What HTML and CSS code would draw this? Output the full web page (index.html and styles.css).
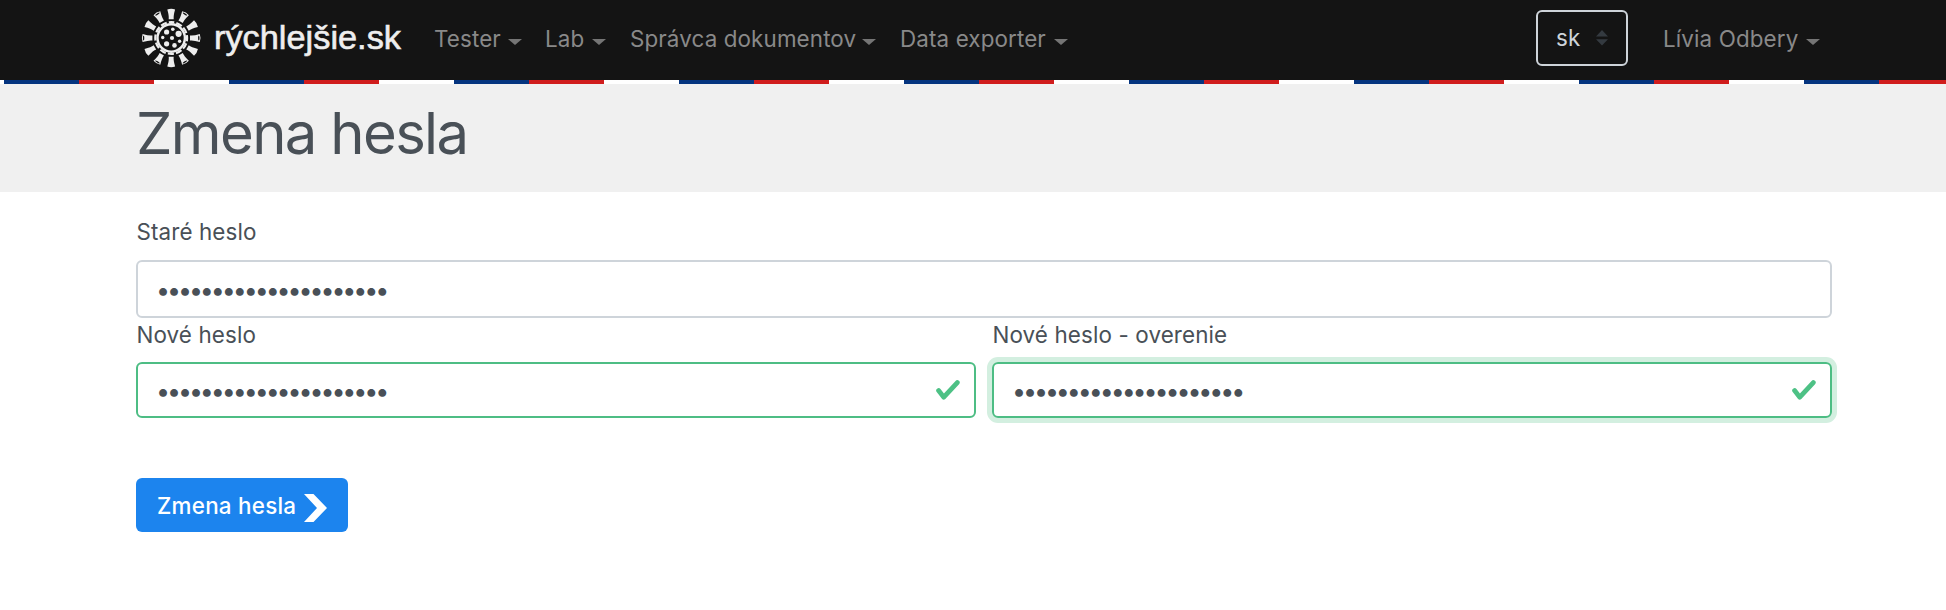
FILE: index.html
```html
<!DOCTYPE html>
<html lang="sk">
<head>
<meta charset="utf-8">
<title>Zmena hesla</title>
<link rel="stylesheet" href="styles.css">
</head>
<body>
<header class="navbar">
  <svg class="logo" width="272" height="80" viewBox="136 0 272 80">
    <defs>
      <path id="spike" d="M-3.9 -28.6 Q0 -30 3.9 -28.6 Q2 -22 2.5 -18.8 L-2.5 -18.8 Q-2 -22 -3.9 -28.6Z"/>
    </defs>
    <g transform="translate(171.2 38)" fill="#eee">
      <use href="#spike"/>
      <use href="#spike" transform="rotate(30)"/>
      <use href="#spike" transform="rotate(60)"/>
      <use href="#spike" transform="rotate(90)"/>
      <use href="#spike" transform="rotate(120)"/>
      <use href="#spike" transform="rotate(150)"/>
      <use href="#spike" transform="rotate(180)"/>
      <use href="#spike" transform="rotate(210)"/>
      <use href="#spike" transform="rotate(240)"/>
      <use href="#spike" transform="rotate(270)"/>
      <use href="#spike" transform="rotate(300)"/>
      <use href="#spike" transform="rotate(330)"/>
      <circle r="13.7" fill="none" stroke="#eee" stroke-width="2.4"/>
      <circle r="15.9" fill="none" stroke="#eee" stroke-width="2.2" stroke-dasharray="6.2 2.125" stroke-dashoffset="3.1" transform="rotate(-90)"/>
      <circle cx="-4.6" cy="-6" r="2.6"/><circle cx="1.6" cy="-8.8" r="1.8"/>
      <circle cx="7.4" cy="-4.2" r="3.1"/><circle cx="-8.5" cy="-.5" r="1.7"/>
      <circle cx=".8" cy="0" r="2.1"/><circle cx="-4.6" cy="5.8" r="2.6"/>
      <circle cx="8.4" cy="3.2" r="1.7"/><circle cx="3.3" cy="7.4" r="2.3"/>
      <g fill="#141414">
        <ellipse cy="-27.6" rx="2.6" ry=".7" transform="rotate(30)"/>
        <ellipse cy="-27.6" rx="2.6" ry=".7" transform="rotate(90)"/>
        <ellipse cy="-27.6" rx="2.6" ry=".7" transform="rotate(150)"/>
        <ellipse cy="-27.6" rx="2.6" ry=".7" transform="rotate(210)"/>
        <ellipse cy="-27.6" rx="2.6" ry=".7" transform="rotate(270)"/>
        <ellipse cy="-27.6" rx="2.6" ry=".7" transform="rotate(330)"/>
      </g>
    </g>
    <text class="wordmark" x="214" y="48.8" textLength="187" lengthAdjust="spacingAndGlyphs">rýchlejšie.sk</text>
  </svg>
  <nav class="menu">
    <a class="menu-item item-tester">Tester<i class="caret"></i></a>
    <a class="menu-item item-lab">Lab<i class="caret"></i></a>
    <a class="menu-item item-docs">Správca dokumentov<i class="caret"></i></a>
    <a class="menu-item item-data">Data exporter<i class="caret"></i></a>
  </nav>
  <div class="language">sk
    <svg width="12" height="16" viewBox="0 0 12 16" fill="#343a40"><path d="M0 6.4 6 0l6 6.4zM0 9.3h12L6 15.6z"/></svg>
  </div>
  <a class="menu-item item-user">Lívia Odbery<i class="caret"></i></a>
</header>
<div class="stripe"></div>
<div class="heading"><h1>Zmena hesla</h1></div>
<main class="form">
  <label class="field field-old"><span class="label">Staré heslo</span>
    <span class="control"><span class="dots">•••••••••••••••••••••</span></span>
  </label>
  <div class="row">
    <label class="field"><span class="label">Nové heslo</span>
      <span class="control valid"><span class="dots">•••••••••••••••••••••</span>
        <svg class="check" width="24" height="21" viewBox="0 0 24 21"><path d="M2.6 10.6 7.8 17.2 21.3 2.6"/></svg>
      </span>
    </label>
    <label class="field"><span class="label">Nové heslo - overenie</span>
      <span class="control valid focused"><span class="dots">•••••••••••••••••••••</span>
        <svg class="check" width="24" height="21" viewBox="0 0 24 21"><path d="M2.6 10.6 7.8 17.2 21.3 2.6"/></svg>
      </span>
    </label>
  </div>
  <button class="submit"><span>Zmena hesla</span>
    <svg width="23" height="28" viewBox="0 0 23 28" fill="#fff"><path d="M0 0h9.5L23 14 9.5 28H0l13-14z"/></svg>
  </button>
</main>
</body>
</html>
```
FILE: styles.css
```css
* { box-sizing: border-box; }
body {
  margin: 0;
  background: #fff;
  color: #495057;
  font: 22.4px/34px Inter, "Liberation Sans", sans-serif;
  letter-spacing: 0.12px;
}
.navbar {
  display: flex;
  align-items: center;
  height: 80px;
  padding: 0 126px 0 136px;
  background: #141414;
  color: #898989;
}
.logo { display: block; flex: none; }
.wordmark {
  font: 34px "Liberation Sans", Arial, sans-serif;
  letter-spacing: 0;
  fill: #eee;
  stroke: #eee;
  stroke-width: 0.6px;
}
.menu { display: flex; flex: 1; padding-left: 26px; }
.menu-item { display: flex; align-items: center; justify-content: space-between; white-space: nowrap; height: 34px; margin-top: -2px; }
.item-tester { width: 88px; margin-right: 23px; }
.item-lab { width: 61px; margin-right: 24px; }
.item-docs { width: 246px; margin-right: 24px; }
.item-data { width: 168px; }
.item-user { width: 157px; }
.caret {
  border: 7px solid transparent;
  border-top: 6.5px solid #757575;
  border-bottom: 0;
  margin-top: 6px;
}
.language {
  display: flex;
  align-items: center;
  justify-content: space-between;
  width: 92px;
  height: 56px;
  margin: -4px 35px 0 0;
  padding: 0 18px;
  border: 2px solid #ced4da;
  border-radius: 6px;
  color: #ced4da;
}
.stripe {
  height: 4px;
  background: repeating-linear-gradient(90deg, #04347f 0 75px, #d01c1c 75px 150px, #fff 150px 225px) 4px 0 / 225px 4px;
}
.heading { height: 108px; padding: 11px 136px; background: #f0f0f0; }
h1 { margin: 0; font-size: 58px; line-height: 76px; font-weight: 400; letter-spacing: -1.65px; }
.form { padding: 23px 114px 0 136px; }
.field { display: block; flex: 1; }
.label { display: block; height: 45px; padding-left: 0.5px; }
.control {
  display: flex;
  align-items: center;
  justify-content: space-between;
  height: 56px;
  padding: 0 14px 0 18px;
  border: 2px solid #ced4da;
  border-radius: 6px;
}
.field-old .control { height: 58px; }
.row { display: flex; gap: 16px; }
.row .label { height: 44px; }
.valid { border-color: #4dbd84; }
.focused { box-shadow: 0 0 0 5px #d3efe0; }
.dots { font-size: 25px; letter-spacing: -3.1px; padding-top: 2px; }
.check { fill: none; stroke: #4dc185; stroke-width: 4.8; stroke-linecap: round; stroke-linejoin: round; }
.submit {
  display: flex;
  align-items: center;
  justify-content: space-between;
  width: 212px;
  height: 54px;
  margin-top: 60px;
  padding: 0 21px;
  border: 0;
  border-radius: 6px;
  background: #1c84ee;
  color: #fff;
  font: inherit;
  font-weight: 500;
  letter-spacing: 0.25px;
}
.submit span { padding-top: 1px; }
.submit svg { margin-top: 5px; }
```
